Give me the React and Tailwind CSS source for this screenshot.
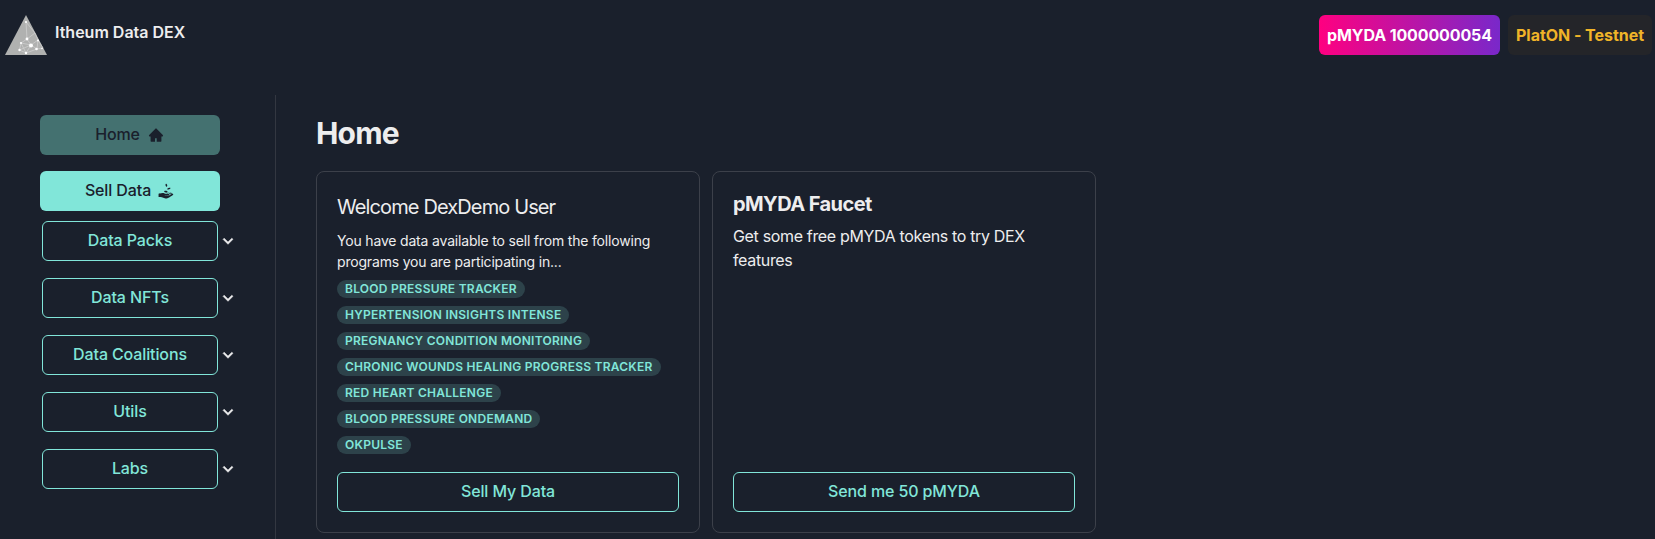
import { AiFillHome } from "react-icons/ai";
import { GiReceiveMoney } from "react-icons/gi";

const menus = ["Data Packs", "Data NFTs", "Data Coalitions", "Utils", "Labs"];
const programs = [
  "Blood Pressure Tracker",
  "Hypertension Insights Intense",
  "Pregnancy Condition Monitoring",
  "Chronic Wounds Healing Progress Tracker",
  "Red Heart Challenge",
  "Blood Pressure OnDemand",
  "OkPulse",
];

function Logo() {
  return (
    <svg className="h-10 w-[42px] shrink-0" viewBox="0 0 42 40">
      <path d="M21 0 42 40H0Z" fill="#b0b1b0" />
      <g stroke="#d2d3d2" strokeWidth="0.7" fill="none">
        <path d="M21 7 22 24 16 28 14.500 35 21 38 16 28 26 30 22 24 30 18M21 7 30 18 33 25 26 30 32 34 33 25M14.500 35 26 30 21 38 32 34 38 33 33 25" />
      </g>
      <g fill="#fff">
        <circle cx="21" cy="7" r="1.100" />
        <circle cx="22" cy="24" r="1.400" />
        <circle cx="16" cy="28" r="1.100" />
        <circle cx="26" cy="30.500" r="2" />
        <circle cx="14.500" cy="35" r="1.200" />
        <circle cx="21" cy="38" r="1.200" />
        <circle cx="31.500" cy="34" r="1.300" />
        <circle cx="33" cy="25.500" r="1" />
        <circle cx="37" cy="33.500" r="0.800" />
      </g>
    </svg>
  );
}

function Chevron() {
  return (
    <svg className="h-5 w-5 shrink-0" viewBox="0 0 24 24" fill="currentColor" stroke="currentColor" strokeWidth="0.6">
      <path d="M16.590 8.590L12 13.170 7.410 8.590 6 10l6 6 6-6z" />
    </svg>
  );
}

function OutlineButton({ children, className }) {
  return (
    <button className={"h-10 rounded-md border border-[#81e6d9] pb-0.5 text-base font-medium tracking-[-0.12px] text-[#81e6d9] " + className}>
      {children}
    </button>
  );
}

export default function App() {
  return (
    <div className="flex h-[539px] w-full flex-col overflow-hidden bg-[#1a202c] font-['Inter','Liberation_Sans',sans-serif] text-[#ededee]">
      <header className="flex h-[95px] shrink-0 items-start justify-between pt-[15px] pr-[3px] pl-[5px]">
        <div className="flex gap-2">
          <Logo />
          <h1 className="pt-[7px] text-base leading-5 font-semibold">Itheum Data DEX</h1>
        </div>
        <div className="flex gap-2 text-base font-bold">
          <div className="flex h-10 w-[181px] items-center justify-center rounded-md bg-linear-to-l/srgb from-[#7928ca] to-[#ff0080] tracking-[-0.12px] text-white">
            pMYDA 1000000054
          </div>
          <div className="flex h-10 w-36 items-center justify-center rounded-md bg-[#242529] tracking-[-0.04px] text-[#f0b428]">PlatON - Testnet</div>
        </div>
      </header>
      <div className="flex grow">
        <nav className="flex w-[276px] shrink-0 flex-col border-r border-[#333741] pt-5 pl-10">
          <button className="flex h-10 w-[180px] items-center justify-center gap-2 rounded-md bg-[#447170] pr-px text-base font-medium tracking-[-0.12px] text-[#1a202c]">
            <span className="pb-0.5">Home</span>
            <AiFillHome className="h-4 w-4" />
          </button>
          <button className="mt-4 flex h-10 w-[180px] items-center justify-center gap-[7px] rounded-md bg-[#81e6d9] pr-px text-base font-medium tracking-[-0.12px] text-[#1a202c]">
            <span className="pb-0.5">Sell Data</span>
            <GiReceiveMoney className="h-4 w-4" />
          </button>
          <div className="mt-2.5 flex flex-col gap-[17px] pl-0.5">
            {menus.map((m) => (
              <div key={m} className="flex items-center">
                <OutlineButton className="w-44">{m}</OutlineButton>
                <Chevron />
              </div>
            ))}
          </div>
        </nav>
        <main className="pt-5 pl-10">
          <h2 className="text-3xl leading-9 font-bold tracking-[-0.8px]">Home</h2>
          <div className="mt-5 flex gap-3">
            <section className="flex h-[362px] w-96 flex-col rounded-lg border border-[#3c404a] px-5 pt-[23px] pb-5">
              <h3 className="text-xl leading-6 tracking-[-0.88px]">Welcome DexDemo User</h3>
              <p className="mt-[11px] text-sm leading-[21px] tracking-[-0.18px]">You have data available to sell from the following programs you are participating in...</p>
              <ul className="mt-2 flex flex-col items-start gap-2">
                {programs.map((p) => (
                  <li key={p} className="h-[18px] rounded-full bg-[#2d424a] px-2 text-xs leading-[18px] font-semibold tracking-[0.25px] whitespace-nowrap text-[#81e6d9] uppercase">
                    {p}
                  </li>
                ))}
              </ul>
              <OutlineButton className="mt-auto w-full">Sell My Data</OutlineButton>
            </section>
            <section className="flex h-[362px] w-96 flex-col rounded-lg border border-[#3c404a] p-5">
              <h3 className="text-xl leading-6 font-bold tracking-[-0.57px]">pMYDA Faucet</h3>
              <p className="mt-2 text-base leading-6 tracking-[-0.34px]">Get some free pMYDA tokens to try DEX features</p>
              <OutlineButton className="mt-auto w-full">Send me 50 pMYDA</OutlineButton>
            </section>
          </div>
        </main>
      </div>
    </div>
  );
}
